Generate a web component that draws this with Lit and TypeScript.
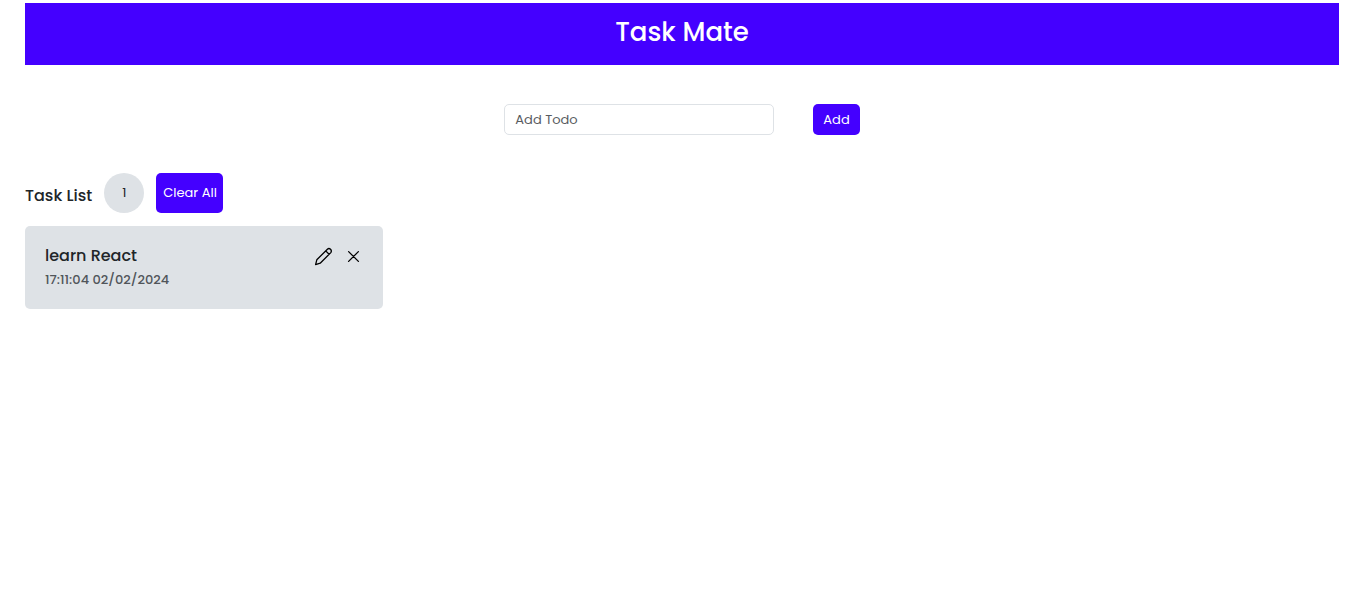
import { LitElement, html, css } from "lit";
import { customElement, state } from "lit/decorators.js";

interface Task {
  id: number;
  name: string;
  time: string;
}

@customElement("app-root")
class AppRoot extends LitElement {
  static styles = css`
    :host {
      display: block;
      padding: 3px 26px 0 25px;
      font-family: Poppins, Inter, "Open Sans", sans-serif;
      font-size: 13px;
      line-height: 20px;
      color: #212529;
    }
    * { box-sizing: border-box; }
    h1, h2, h3, p, ul { margin: 0; padding: 0; font-weight: 500; }
    ul { list-style: none; }
    button, input { font: inherit; }
    header {
      background: #4400ff;
      color: #fff;
      text-align: center;
      padding: 14px 0 18px;
    }
    h1 { font-size: 26px; line-height: 30px; }
    form {
      display: flex;
      justify-content: center;
      gap: 39px;
      margin: 39px 0 38px;
    }
    .field {
      width: 270px;
      padding: 5px 10px 4px;
      border: 1px solid #dee2e6;
      border-radius: 5px;
      color: #212529;
    }
    .field::placeholder { color: #595c5f; opacity: 1; }
    .primary {
      border: 0;
      border-radius: 5px;
      background: #4400ff;
      color: #fff;
      padding: 6px 10px 5px;
    }
    .bar {
      display: flex;
      align-items: center;
      gap: 12px;
      margin-bottom: 13px;
    }
    h2, h3 { font-size: 16px; line-height: 20px; }
    h2 { padding-top: 5px; }
    .count {
      display: grid;
      place-items: center;
      width: 40px;
      height: 40px;
      border-radius: 50%;
      background: #dee2e6;
    }
    .clear { height: 40px; padding: 0 6px 0 7px; }
    .cards {
      display: grid;
      grid-template-columns: repeat(auto-fill, minmax(min(100%, 320px), 358px));
      gap: 20px;
    }
    .card {
      display: flex;
      justify-content: space-between;
      align-items: flex-start;
      padding: 20px 20px 19px;
      border-radius: 5px;
      background: #dee2e6;
    }
    .time { color: #50555a; padding-top: 4px; }
    .actions { display: flex; gap: 10px; }
    .icon {
      display: grid;
      padding: 0;
      border: 0;
      background: none;
      color: #000;
    }
    svg { width: 20px; height: 20px; fill: none; stroke: currentColor; }
  `;

  @state() private tasks: Task[] = [
    { id: 1, name: "learn React", time: "17:11:04 02/02/2024" },
  ];

  private add(e: Event) {
    e.preventDefault();
    const form = e.target as HTMLFormElement;
    const name = String(new FormData(form).get("task") ?? "").trim();
    if (!name) return;
    const now = new Date();
    const time = `${now.toLocaleTimeString("en-GB")} ${now.toLocaleDateString("en-GB")}`;
    this.tasks = [...this.tasks, { id: now.getTime(), name, time }];
    form.reset();
  }

  private remove(id: number) {
    this.tasks = this.tasks.filter((t) => t.id !== id);
  }

  render() {
    return html`
      <header><h1>Task Mate</h1></header>
      <form @submit=${this.add}>
        <input class="field" name="task" type="text" placeholder="Add Todo" aria-label="Add Todo" autocomplete="off" />
        <button class="primary" type="submit">Add</button>
      </form>
      <div class="bar">
        <h2>Task List</h2>
        <span class="count">${this.tasks.length}</span>
        <button class="primary clear" type="button" @click=${() => (this.tasks = [])}>Clear All</button>
      </div>
      <ul class="cards">
        ${this.tasks.map(
          (t) => html`
            <li class="card">
              <div>
                <h3>${t.name}</h3>
                <p class="time">${t.time}</p>
              </div>
              <div class="actions">
                <button class="icon" type="button" aria-label="Edit">
                  <svg viewBox="0 0 20 20" stroke-width="1.3" stroke-linejoin="round">
                    <path d="M2.6 18.6 3.8 13.8 14.4 3.2Q16 1.8 17.5 3.3T17.8 6.6L7.2 17.2ZM12.7 4.9 16.1 8.3" />
                  </svg>
                </button>
                <button class="icon" type="button" aria-label="Delete" @click=${() => this.remove(t.id)}>
                  <svg viewBox="0 0 20 20" stroke-width="1.3" stroke-linecap="round">
                    <path d="M5.6 5.6 15.4 15.4M15.4 5.6 5.6 15.4" />
                  </svg>
                </button>
              </div>
            </li>
          `
        )}
      </ul>
    `;
  }
}
